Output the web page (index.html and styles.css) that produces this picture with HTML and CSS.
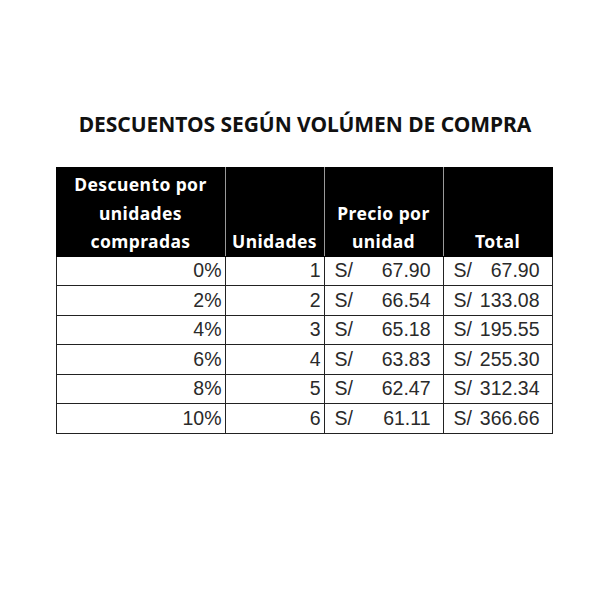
FILE: index.html
```html
<!DOCTYPE html>
<html>
<head>
<meta charset="utf-8">
<link rel="stylesheet" href="styles.css">
</head>
<body>
<div class="page">
  <h1 class="title">DESCUENTOS SEGÚN VOLÚMEN DE COMPRA</h1>
  <table class="tbl">
    <colgroup>
      <col class="c1"><col class="c2"><col class="c3"><col class="c4">
    </colgroup>
    <thead>
      <tr>
        <th>Descuento por<br>unidades<br>compradas</th>
        <th>Unidades</th>
        <th>Precio por<br>unidad</th>
        <th>Total</th>
      </tr>
    </thead>
    <tbody>
      <tr><td class="num">0%</td><td class="num">1</td><td class="acc"><span class="cur">S/</span><span class="val">67.90</span></td><td class="acc"><span class="cur">S/</span><span class="val">67.90</span></td></tr>
      <tr><td class="num">2%</td><td class="num">2</td><td class="acc"><span class="cur">S/</span><span class="val">66.54</span></td><td class="acc"><span class="cur">S/</span><span class="val">133.08</span></td></tr>
      <tr><td class="num">4%</td><td class="num">3</td><td class="acc"><span class="cur">S/</span><span class="val">65.18</span></td><td class="acc"><span class="cur">S/</span><span class="val">195.55</span></td></tr>
      <tr><td class="num">6%</td><td class="num">4</td><td class="acc"><span class="cur">S/</span><span class="val">63.83</span></td><td class="acc"><span class="cur">S/</span><span class="val">255.30</span></td></tr>
      <tr><td class="num">8%</td><td class="num">5</td><td class="acc"><span class="cur">S/</span><span class="val">62.47</span></td><td class="acc"><span class="cur">S/</span><span class="val">312.34</span></td></tr>
      <tr><td class="num">10%</td><td class="num">6</td><td class="acc"><span class="cur">S/</span><span class="val">61.11</span></td><td class="acc"><span class="cur">S/</span><span class="val">366.66</span></td></tr>
    </tbody>
  </table>
</div>
</body>
</html>
```
FILE: styles.css
```css
html, body {
  margin: 0;
  padding: 0;
  background: #ffffff;
}
.page {
  width: 600px;
  height: 600px;
  padding-top: 110px;
  box-sizing: border-box;
  display: flex;
  flex-direction: column;
  align-items: center;
}
.title {
  margin: 0 0 29px 10px;
  font-family: "Noto Sans", sans-serif;
  font-weight: 700;
  font-size: 21px;
  line-height: 28px;
  color: #111111;
  letter-spacing: -0.05px;
}
.tbl {
  border-collapse: collapse;
  width: 496px;
  table-layout: fixed;
  margin-left: 8px;
}
.c1 { width: 169px; }
.c2 { width: 99px; }
.c3 { width: 119px; }
.c4 { width: 109px; }
.tbl th {
  background: #000000;
  color: #ffffff;
  font-family: "Noto Sans", sans-serif;
  font-weight: 700;
  font-size: 17.5px;
  letter-spacing: 0.4px;
  line-height: 28.5px;
  vertical-align: bottom;
  text-align: center;
  padding: 2px 0 0 0;
  border: 1.5px solid #000;
  border-left-color: #9a9a9a;
  border-right-color: #9a9a9a;
  height: 87px;
  box-sizing: border-box;
}
.tbl th:first-child { border-left-color: #000; }
.tbl th:last-child { border-right-color: #000; }
.tbl td {
  border: 1.5px solid #222222;
  font-family: "Liberation Sans", Arial, sans-serif;
  font-size: 19.5px;
  color: #2a2a2a;
  height: 29.5px;
  padding: 0;
  box-sizing: border-box;
  line-height: 27px;
}
.tbl td.num {
  text-align: right;
  padding-right: 3px;
}
.tbl td.acc {
  padding: 0 12px 0 10px;
}
.acc {
  white-space: nowrap;
}
.cur {
  float: left;
}
.val {
  float: right;
}
```
